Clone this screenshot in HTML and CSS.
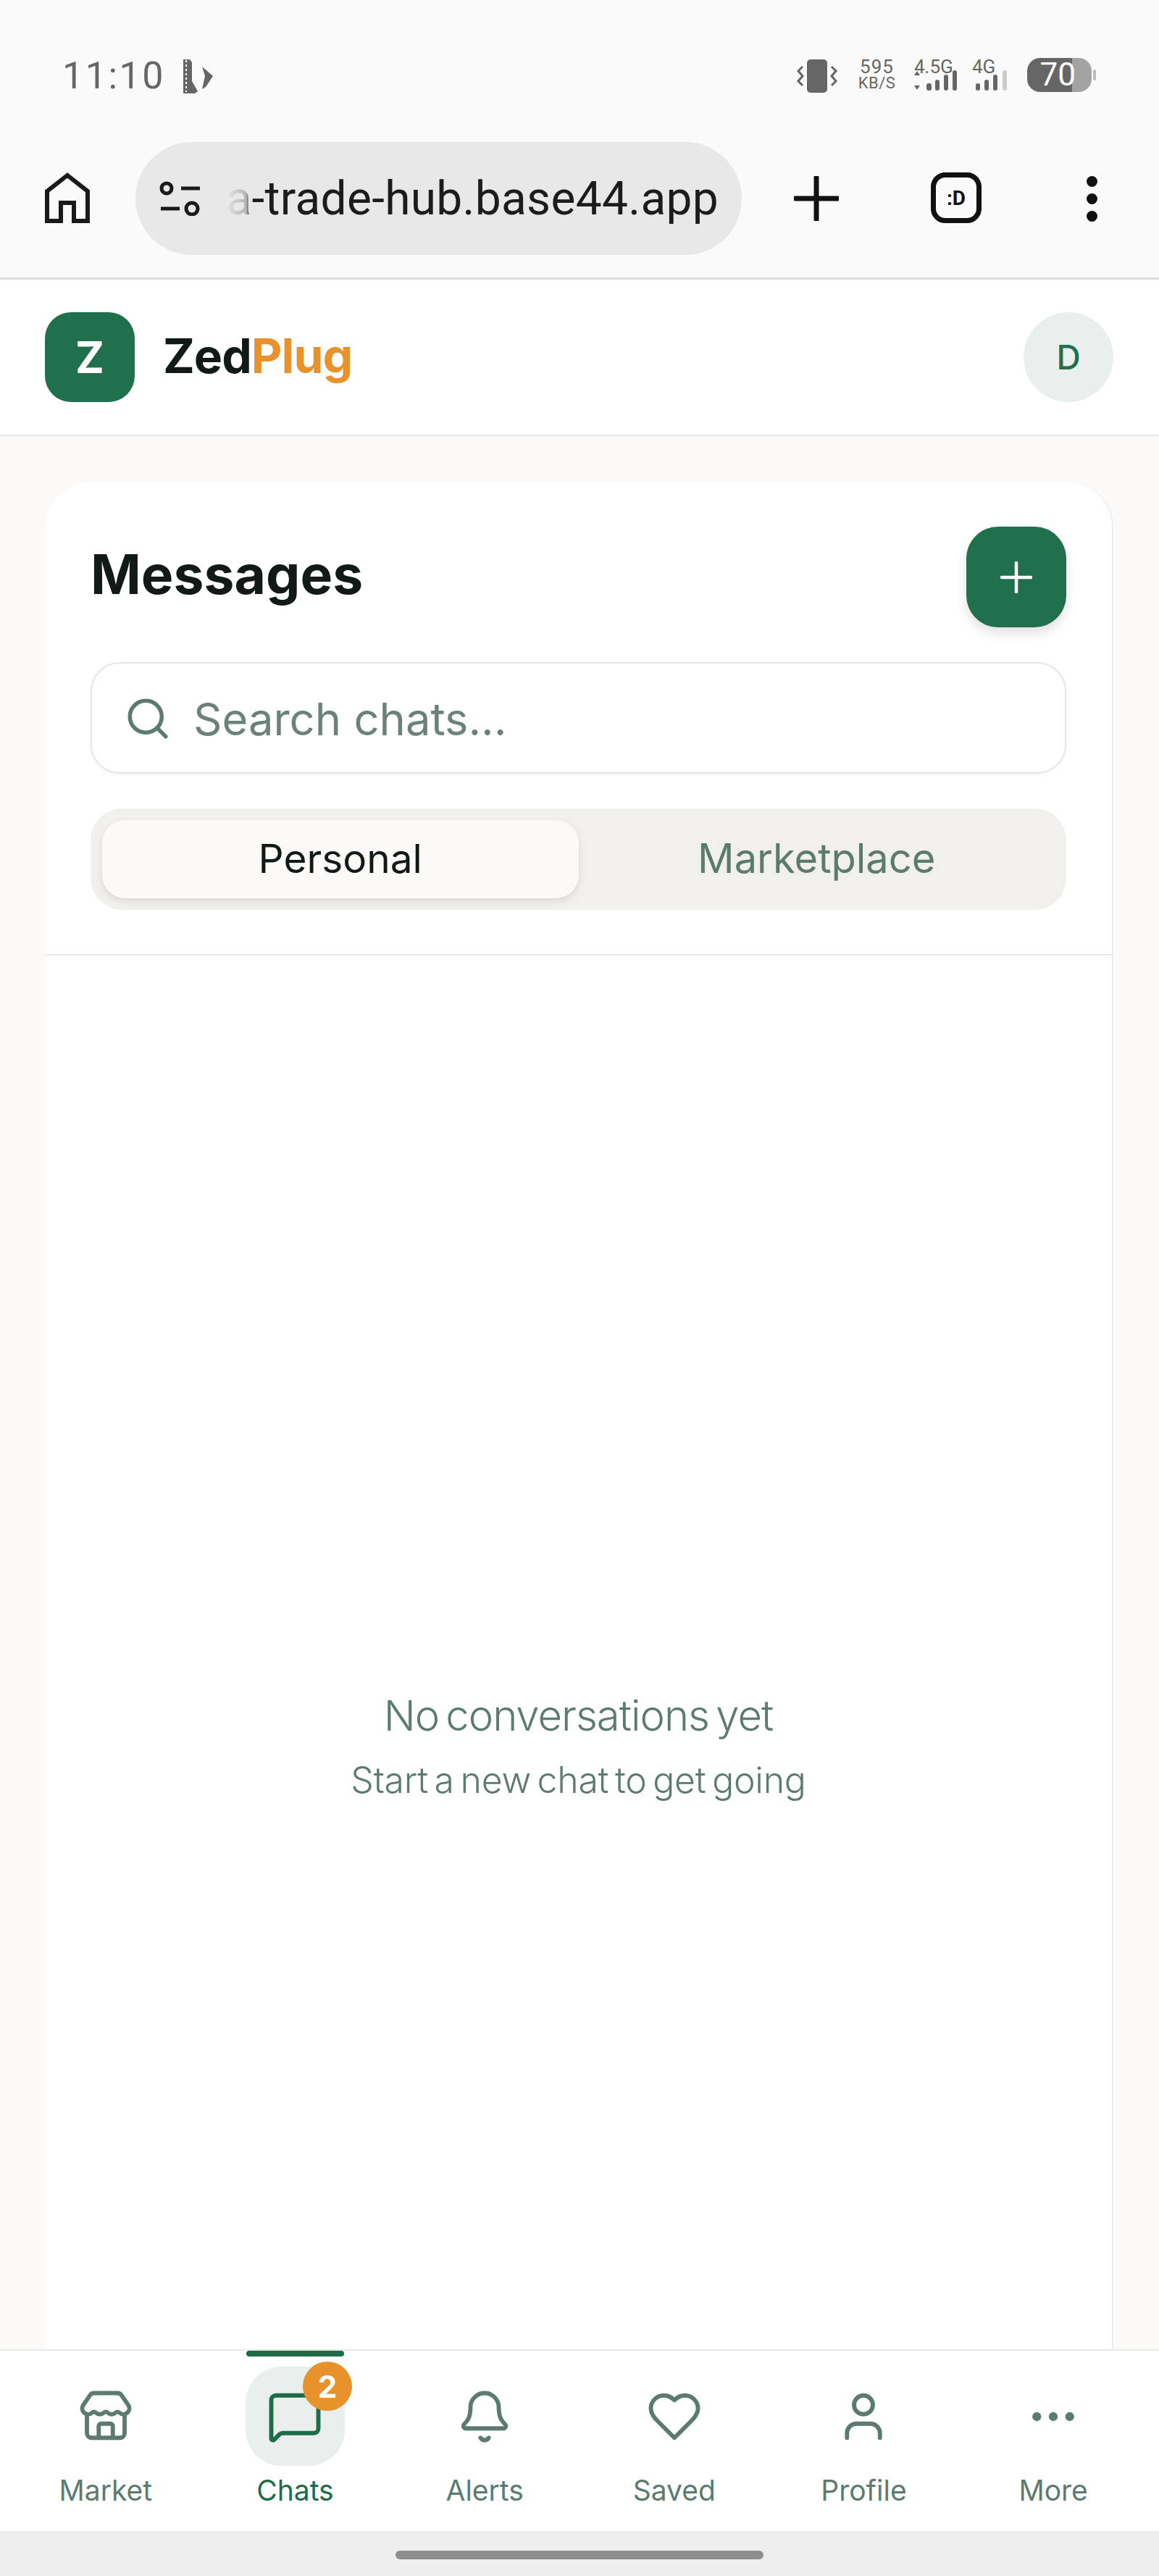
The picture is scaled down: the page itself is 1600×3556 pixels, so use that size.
FILE: index.html
```html
<!DOCTYPE html>
<html lang="en">
<head>
	<meta charset="UTF-8">
	<meta name="viewport" content="width=device-width, initial-scale=1.0">
	<title>ZedPlug - Messages</title>

	<link rel="stylesheet" href="styles.css">
</head>
<body>

	<!-- phone status bar -->
	<div class="status">
		<div class="status-left">
			<span class="time">11:10</span>
			<svg class="bt" viewBox="0 0 46 50"><path d="M3 2h9l3 4v26l8 14-4 3H3z" fill="#666"/><path d="M7 3v44" stroke="#fafafa" stroke-width="2" stroke-dasharray="3 3"/><path d="M29 12l15 13-10 15-5 3 4-18z" fill="#666"/></svg>
		</div>
		<div class="status-right">
			<svg class="vib" viewBox="0 0 60 46"><rect x="16" y="0" width="28" height="46" rx="5" fill="#666"/><path d="M10 10l-6 6 6 7-6 7 6 6M50 10l6 6-6 7 6 7-6 6" fill="none" stroke="#666" stroke-width="3"/></svg>
			<div class="speed"><span class="speed-num">595</span><span class="speed-unit">KB/S</span></div>
			<div class="net net-a">
				<span class="net-label">4.5G</span>
				<svg class="bars-a" viewBox="0 0 60 28"><path d="M4 1l4 6H0zM4 27l4-6H0z" fill="#666"/><rect x="17" y="18" width="7" height="10" rx="3" fill="#666"/><rect x="29" y="13" width="6" height="15" rx="3" fill="#666"/><rect x="41" y="6" width="6" height="22" rx="3" fill="#666"/><rect x="53" y="0" width="6" height="28" rx="3" fill="#666"/></svg>
			</div>
			<div class="net net-b">
				<span class="net-label">4G</span>
				<svg class="bars-b" viewBox="0 0 46 28"><rect x="0" y="18" width="6" height="10" rx="3" fill="#666"/><rect x="12" y="13" width="6" height="15" rx="3" fill="#666"/><rect x="24" y="6" width="6" height="22" rx="3" fill="#666"/><rect x="37" y="0" width="6" height="28" rx="3" fill="#ccc"/></svg>
			</div>
			<div class="battery"><span class="battery-num">70</span></div>
			<span class="battery-nub"></span>
		</div>
	</div>

	<!-- browser toolbar -->
	<div class="toolbar">
		<svg class="tb-home" viewBox="0 0 62 70"><path d="M31 4L3 26v41h19V42h18v25h19V26z" fill="none" stroke="#1a1a1a" stroke-width="6"/></svg>
		<div class="url">
			<svg class="url-tune" viewBox="0 0 58 48"><circle cx="10" cy="10" r="7" fill="none" stroke="#1a1a1a" stroke-width="5"/><path d="M30 10h26M2 38h26" stroke="#1a1a1a" stroke-width="5"/><circle cx="45" cy="38" r="8" fill="none" stroke="#1a1a1a" stroke-width="5"/></svg>
			<div class="url-text"><span>a-trade-hub.base44.app</span></div>
		</div>
		<svg class="tb-plus" viewBox="0 0 62 62"><path d="M31 2v58M2 31h58" stroke="#111" stroke-width="7" stroke-linecap="round"/></svg>
		<div class="tb-tabs">:D</div>
		<div class="tb-menu"><i></i><i></i><i></i></div>
	</div>

	<header class="app-head">
		<div class="brand">
			<div class="logo">Z</div>
			<div class="brand-name">Zed<span>Plug</span></div>
		</div>
		<div class="avatar">D</div>
	</header>

	<main class="page">
		<section class="card">
			<div class="card-top">
				<div class="title-row">
					<h1>Messages</h1>
					<button class="new-chat">
						<svg viewBox="0 0 44 44"><path d="M22 2v40M2 22h40" stroke="#fff" stroke-width="4.5" stroke-linecap="round"/></svg>
					</button>
				</div>
				<div class="search">
					<svg viewBox="0 0 24 24" class="search-icon"><circle cx="11" cy="11" r="8"/><path d="m21 21-4.3-4.3"/></svg>
					<span>Search chats...</span>
				</div>
				<div class="tabs">
					<div class="tab active">Personal</div>
					<div class="tab">Marketplace</div>
				</div>
			</div>
			<div class="empty">
				<p class="empty-title">No conversations yet</p>
				<p class="empty-sub">Start a new chat to get going</p>
			</div>
		</section>
	</main>

	<nav class="bottom-nav">
		<a class="nav-item">
			<span class="nav-icon">
				<svg viewBox="0 0 24 24"><path d="M15 21v-5a1 1 0 0 0-1-1h-4a1 1 0 0 0-1 1v5"/><path d="M17.774 10.31a1.12 1.12 0 0 0-1.549 0 2.5 2.5 0 0 1-3.451 0 1.12 1.12 0 0 0-1.548 0 2.5 2.5 0 0 1-3.452 0 1.12 1.12 0 0 0-1.549 0 2.5 2.5 0 0 1-3.77-3.248l2.889-4.184A2 2 0 0 1 7 2h10a2 2 0 0 1 1.653.873l2.895 4.192a2.5 2.5 0 0 1-3.774 3.244"/><path d="M4 10.95V19a2 2 0 0 0 2 2h12a2 2 0 0 0 2-2v-8.05"/></svg>
			</span>
			<span class="nav-label">Market</span>
		</a>
		<a class="nav-item current">
			<span class="nav-bar"></span>
			<span class="nav-icon">
				<svg viewBox="0 0 24 24"><path d="M22 17a2 2 0 0 1-2 2H6.828a2 2 0 0 0-1.414.586l-2.202 2.202A.71.71 0 0 1 2 21.286V5a2 2 0 0 1 2-2h16a2 2 0 0 1 2 2z"/></svg>
				<span class="badge">2</span>
			</span>
			<span class="nav-label">Chats</span>
		</a>
		<a class="nav-item">
			<span class="nav-icon">
				<svg viewBox="0 0 24 24"><path d="M10.268 21a2 2 0 0 0 3.464 0"/><path d="M3.262 15.326A1 1 0 0 0 4 17h16a1 1 0 0 0 .74-1.673C19.41 13.956 18 12.499 18 8A6 6 0 0 0 6 8c0 4.499-1.411 5.956-2.738 7.326"/></svg>
			</span>
			<span class="nav-label">Alerts</span>
		</a>
		<a class="nav-item">
			<span class="nav-icon">
				<svg viewBox="0 0 24 24"><path d="M19 14c1.49-1.46 3-3.21 3-5.5A5.5 5.5 0 0 0 16.5 3c-1.76 0-3 .5-4.5 2-1.5-1.5-2.74-2-4.5-2A5.5 5.5 0 0 0 2 8.5c0 2.3 1.5 4.05 3 5.5l7 7Z"/></svg>
			</span>
			<span class="nav-label">Saved</span>
		</a>
		<a class="nav-item">
			<span class="nav-icon">
				<svg viewBox="0 0 24 24"><path d="M19 21v-2a4 4 0 0 0-4-4H9a4 4 0 0 0-4 4v2"/><circle cx="12" cy="7" r="4"/></svg>
			</span>
			<span class="nav-label">Profile</span>
		</a>
		<a class="nav-item">
			<span class="nav-icon">
				<svg viewBox="0 0 24 24"><circle cx="12" cy="12" r="1"/><circle cx="19" cy="12" r="1"/><circle cx="5" cy="12" r="1"/></svg>
			</span>
			<span class="nav-label">More</span>
		</a>
	</nav>

	<div class="gesture"><span></span></div>

</body>
</html>
```

FILE: styles.css
```css
* {
	margin: 0;
	padding: 0;
	box-sizing: border-box;
}

html, body {
	width: 1600px;
	height: 3556px;
	overflow: hidden;
}

body {
	display: flex;
	flex-direction: column;
	font-family: "Inter", "Liberation Sans", sans-serif;
	background-color: #fbfaf8;
	color: #111a16;
}

/* status bar */

.status {
	flex: 0 0 180px;
	background-color: #fafafa;
	display: flex;
	justify-content: space-between;
	align-items: flex-start;
	padding: 80px 87px 0 86px;
	color: #666;
}

.status-left {
	display: flex;
	align-items: center;
	gap: 22px;
	height: 50px;
}

.time {
	font-family: "Roboto", sans-serif;
	font-size: 52px;
	line-height: 50px;
	letter-spacing: 2.5px;
}

.bt {
	width: 46px;
	height: 50px;
}

.status-right {
	display: flex;
	align-items: flex-start;
	font-family: "Roboto", sans-serif;
}

.vib {
	width: 60px;
	height: 46px;
	margin-top: 2px;
}

.speed {
	display: flex;
	flex-direction: column;
	align-items: center;
	margin-left: 25px;
	width: 55px;
}

.speed-num {
	font-size: 26px;
	line-height: 24px;
	letter-spacing: 1px;
}

.speed-unit {
	font-size: 22px;
	line-height: 22px;
	letter-spacing: .5px;
	white-space: nowrap;
}

.net {
	display: flex;
	flex-direction: column;
}

.net-label {
	font-size: 26px;
	line-height: 24px;
}

.net-a {
	margin-left: 24px;
	width: 60px;
}

.net-b {
	margin-left: 25px;
	width: 46px;
}

.net-b .net-label {
	margin-left: -5px;
}

.bars-a {
	width: 60px;
	height: 28px;
	margin-top: -7px;
}

.bars-b {
	width: 46px;
	height: 28px;
	margin-top: -7px;
}

.battery {
	margin-left: 25px;
	width: 89px;
	height: 47px;
	border-radius: 18px;
	background: linear-gradient(to right, #666 70%, #a3a3a3 70%);
	color: #fff;
	text-align: right;
	padding-right: 22px;
}

.battery-num {
	font-size: 44px;
	line-height: 47px;
}

.battery-nub {
	width: 4px;
	height: 15px;
	margin: 16px 0 0 2px;
	background-color: #bbb;
	border-radius: 2px;
}

/* browser toolbar */

.toolbar {
	flex: 0 0 206px;
	background-color: #fafafa;
	border-bottom: 3px solid #dedede;
	display: flex;
	align-items: flex-start;
	padding: 16px 0 0 62px;
}

.tb-home {
	width: 62px;
	height: 70px;
	margin-top: 42px;
}

.url {
	width: 837px;
	height: 156px;
	margin-left: 63px;
	background-color: #e8e8e8;
	border-radius: 78px;
	display: flex;
	align-items: center;
	padding-left: 33px;
}

.url-tune {
	flex: none;
	width: 58px;
	height: 48px;
}

.url-text {
	width: 682px;
	margin-left: 32px;
	display: flex;
	justify-content: flex-end;
	overflow: hidden;
	white-space: nowrap;
	font-family: "Roboto", sans-serif;
	font-size: 64px;
	letter-spacing: .3px;
	color: #1c1c1c;
	-webkit-mask-image: linear-gradient(to right, transparent, rgba(0, 0, 0, .25) 30px, #000 35px);
	mask-image: linear-gradient(to right, transparent, rgba(0, 0, 0, .25) 30px, #000 35px);
}

.tb-plus {
	width: 62px;
	height: 62px;
	margin: 47px 0 0 72px;
}

.tb-tabs {
	width: 70px;
	height: 70px;
	margin: 42px 0 0 127px;
	border: 7px solid #111;
	border-radius: 20px;
	display: flex;
	align-items: center;
	justify-content: center;
	font-family: "Roboto", sans-serif;
	font-size: 28px;
	font-weight: 700;
	color: #111;
}

.tb-menu {
	margin: 47px 0 0 145px;
	display: flex;
	flex-direction: column;
	gap: 9px;
}

.tb-menu i {
	display: block;
	width: 15px;
	height: 15px;
	border-radius: 50%;
	background-color: #111;
}

/* app header */

.app-head {
	flex: 0 0 216px;
	background-color: #fff;
	border-bottom: 2px solid #e8e8e6;
	display: flex;
	align-items: center;
	justify-content: space-between;
	padding: 0 63px 0 62px;
}

.brand {
	display: flex;
	align-items: center;
	gap: 39px;
}

.logo {
	width: 124px;
	height: 124px;
	border-radius: 36px;
	background-color: #21704d;
	color: #fff;
	display: flex;
	align-items: center;
	justify-content: center;
	font-size: 60px;
	font-weight: 700;
}

.brand-name {
	font-size: 66px;
	font-weight: 700;
	letter-spacing: -1px;
	padding-bottom: 4px;
	color: #111a16;
}

.brand-name span {
	color: #e8922c;
}

.avatar {
	width: 124px;
	height: 124px;
	border-radius: 50%;
	background-color: #e8efec;
	color: #21704d;
	display: flex;
	align-items: center;
	justify-content: center;
	font-size: 46px;
	font-weight: 500;
}

/* messages card */

.page {
	flex: 1;
	min-height: 0;
	padding: 64px 63px 0 62px;
	display: flex;
}

.card {
	flex: 1;
	background-color: #fff;
	border-right: 2px solid #efeeec;
	border-radius: 62px 62px 0 0;
	display: flex;
	flex-direction: column;
}

.card-top {
	padding: 61px 63px 61px 63px;
	border-bottom: 2px solid #e8e8e6;
}

.title-row {
	display: flex;
	align-items: center;
	justify-content: space-between;
}

h1 {
	font-size: 75px;
	font-weight: 700;
	padding-bottom: 8px;
	color: #111a16;
}

.new-chat {
	width: 138px;
	height: 139px;
	border: none;
	border-radius: 44px;
	background-color: #21704d;
	box-shadow: 0 8px 16px rgba(0, 0, 0, .12);
	display: flex;
	align-items: center;
	justify-content: center;
}

.new-chat svg {
	width: 44px;
	height: 44px;
}

.search {
	margin-top: 48px;
	height: 154px;
	border: 2px solid #e6e6e4;
	border-radius: 40px;
	box-shadow: 0 2px 4px rgba(0, 0, 0, .04);
	display: flex;
	align-items: center;
	gap: 30px;
	padding: 2px 0 0 44px;
	font-size: 61.5px;
	color: #6b8279;
}

.search-icon {
	width: 66px;
	height: 66px;
	fill: none;
	stroke: #5c7b6f;
	stroke-width: 2;
	stroke-linecap: round;
	stroke-linejoin: round;
}

.tabs {
	margin-top: 48px;
	height: 140px;
	border-radius: 44px;
	background-color: #f1f0ed;
	display: grid;
	grid-template-columns: 1fr 1fr;
	padding: 16px;
}

.tab {
	border-radius: 32px;
	display: flex;
	align-items: center;
	justify-content: center;
	padding-bottom: 2px;
	font-size: 56px;
	color: #5c7b6f;
}

.tab.active {
	background-color: #fbfaf8;
	color: #111a16;
	font-size: 55px;
	box-shadow: 0 4px 10px rgba(0, 0, 0, .1);
}

.empty {
	flex: 1;
	display: flex;
	flex-direction: column;
	align-items: center;
	justify-content: center;
	padding-top: 258px;
	color: #5c7b6f;
	font-weight: 300;
}

.empty-title {
	font-size: 58px;
	line-height: 80px;
	letter-spacing: -1px;
	word-spacing: -6px;
}

.empty-sub {
	font-size: 50px;
	line-height: 70px;
	margin-top: 14px;
	letter-spacing: -.3px;
	word-spacing: -5px;
}

/* bottom nav */

.bottom-nav {
	flex: 0 0 251px;
	background-color: #fff;
	border-top: 2px solid #e8e8e6;
	display: grid;
	grid-template-columns: repeat(6, 1fr);
	padding: 0 15px;
}

.nav-item {
	position: relative;
	display: flex;
	flex-direction: column;
	align-items: center;
	color: #5c7b6f;
}

.nav-icon {
	position: relative;
	width: 137px;
	height: 137px;
	margin-top: 22px;
	border-radius: 50px;
	display: flex;
	align-items: center;
	justify-content: center;
}

.nav-icon svg {
	width: 78px;
	height: 78px;
	fill: none;
	stroke: currentColor;
	stroke-width: 1.8;
	stroke-linecap: round;
	stroke-linejoin: round;
}

.nav-label {
	font-size: 39px;
	line-height: 50px;
	margin-top: 9px;
	font-weight: 400;
}

.current {
	color: #1d6b47;
}

.current .nav-icon {
	background-color: #e8efec;
}

.nav-bar {
	position: absolute;
	top: 0;
	left: 50%;
	width: 135px;
	height: 8px;
	margin-left: -67px;
	border-radius: 4px;
	background-color: #1d6b47;
}

.badge {
	position: absolute;
	top: -7px;
	right: -10px;
	width: 68px;
	height: 68px;
	border-radius: 50%;
	background-color: #e8922c;
	color: #fff;
	font-size: 42px;
	font-weight: 700;
	display: flex;
	align-items: center;
	justify-content: center;
}

.gesture {
	flex: 0 0 62px;
	background-color: #eee;
	display: flex;
	justify-content: center;
	padding-top: 27px;
}

.gesture span {
	width: 508px;
	height: 12px;
	border-radius: 6px;
	background-color: #8e8e8e;
}
```
